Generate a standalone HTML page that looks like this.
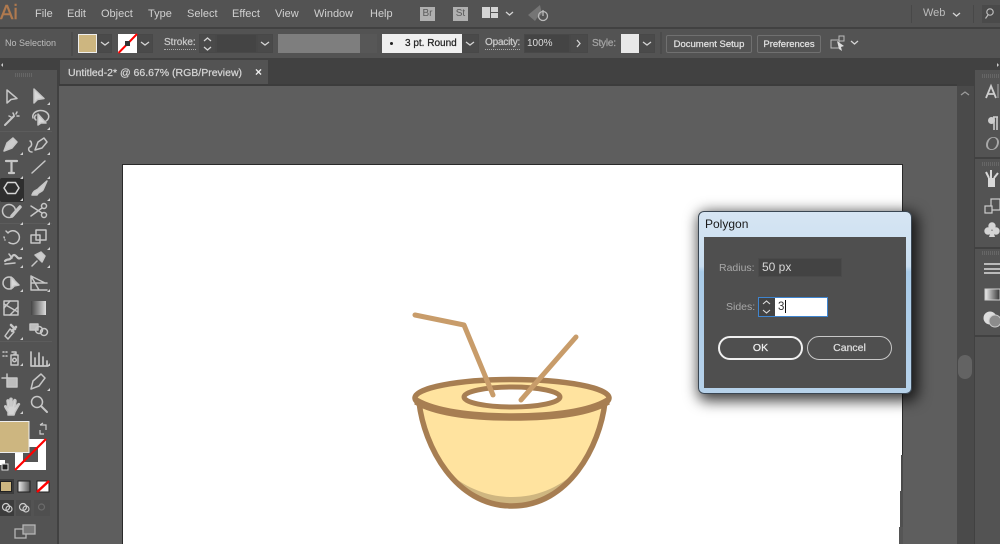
<!DOCTYPE html>
<html><head><meta charset="utf-8">
<style>
html,body{margin:0;padding:0;width:1000px;height:544px;overflow:hidden;background:#535353}
*{box-sizing:border-box}
body{font-family:"Liberation Sans",sans-serif;position:relative}
#w{position:absolute;left:0;top:0;width:1000px;height:544px;overflow:hidden;filter:blur(.3px)}
.a{position:absolute}
.t{position:absolute;white-space:nowrap;color:#d0d0d0;font-size:11px;line-height:14px}
.c{font-size:10px;-webkit-text-stroke:.25px currentColor}
.box{position:absolute;background:#4a4a4a;border:1px solid #484848}
svg{position:absolute;left:0;top:0;overflow:visible}
</style></head><body><div id="w">
<!-- menu bar -->
<div class="a" style="left:0;top:27px;width:1000px;height:2px;background:#414141"></div>
<div class="t" style="left:0;top:2px;font-size:20px;line-height:23px;color:#b07a4f;-webkit-text-stroke:.4px #b07a4f">Ai</div>
<div class="t" style="left:35px;top:7px">File</div>
<div class="t" style="left:67px;top:7px">Edit</div>
<div class="t" style="left:101px;top:7px">Object</div>
<div class="t" style="left:148px;top:7px">Type</div>
<div class="t" style="left:187px;top:7px">Select</div>
<div class="t" style="left:232px;top:7px">Effect</div>
<div class="t" style="left:275px;top:7px">View</div>
<div class="t" style="left:314px;top:7px">Window</div>
<div class="t" style="left:370px;top:7px">Help</div>
<div class="a" style="left:420px;top:7px;width:15px;height:14px;background:#b0b0b0;color:#5a5a5a;font-size:10px;line-height:14px;text-align:center">Br</div>
<div class="a" style="left:453px;top:7px;width:15px;height:14px;background:#b0b0b0;color:#5a5a5a;font-size:10px;line-height:14px;text-align:center">St</div>
<div class="a" style="left:482px;top:7px;width:8px;height:11px;background:#d4d4d4"></div>
<div class="a" style="left:491px;top:7px;width:7px;height:5px;background:#d4d4d4"></div>
<div class="a" style="left:491px;top:13px;width:7px;height:5px;background:#d4d4d4"></div>
<div class="t" style="left:923px;top:6px;color:#bcbcbc">Web</div>
<div class="a" style="left:911px;top:5px;width:1px;height:18px;background:#484848"></div>
<div class="a" style="left:973px;top:5px;width:1px;height:18px;background:#484848"></div>
<div class="a" style="left:982px;top:5px;width:18px;height:18px;background:#4a4a4a"></div>

<!-- control bar -->
<div class="t" style="left:5px;top:36px;font-size:9px;color:#bdbdbd">No Selection</div>
<div class="a" style="left:71px;top:32px;width:2px;height:24px;background:#4b4b4b"></div>
<div class="a" style="left:78px;top:34px;width:19px;height:19px;background:#cdb680;border:1px solid #eee"></div>
<div class="box" style="left:97px;top:34px;width:15px;height:19px"></div>
<div class="a" style="left:118px;top:34px;width:19px;height:19px;background:#fff"></div>
<div class="box" style="left:137px;top:34px;width:16px;height:19px"></div>
<div class="t c" style="left:164px;top:36px;color:#c8c8c8;border-bottom:1px dotted #aaa;line-height:13px">Stroke:</div>
<div class="box" style="left:199px;top:34px;width:17px;height:19px"></div>
<div class="box" style="left:216px;top:34px;width:41px;height:19px;background:#444"></div>
<div class="box" style="left:257px;top:34px;width:16px;height:19px"></div>
<div class="a" style="left:278px;top:34px;width:82px;height:19px;background:#7e7e7e"></div>
<div class="a" style="left:360px;top:34px;width:17px;height:19px;background:#575757"></div>
<div class="a" style="left:382px;top:34px;width:80px;height:19px;background:#f0f0f0"></div>
<div class="t c" style="left:405px;top:37px;color:#222">3 pt. Round</div>
<div class="a" style="left:390px;top:42px;width:3px;height:3px;border-radius:2px;background:#222"></div>
<div class="box" style="left:462px;top:34px;width:17px;height:19px"></div>
<div class="t c" style="left:485px;top:36px;color:#c8c8c8;border-bottom:1px dotted #aaa;line-height:13px;letter-spacing:-.2px">Opacity:</div>
<div class="box" style="left:524px;top:34px;width:46px;height:19px;background:#444"></div>
<div class="t" style="left:527px;top:37px;font-size:10px;color:#ddd">100%</div>
<div class="box" style="left:570px;top:34px;width:18px;height:19px"></div>
<div class="t c" style="left:592px;top:37px;color:#a4a4a4;letter-spacing:-.2px">Style:</div>
<div class="a" style="left:621px;top:34px;width:18px;height:19px;background:#e8e8e8"></div>
<div class="box" style="left:639px;top:34px;width:16px;height:19px"></div>
<div class="a" style="left:660px;top:32px;width:2px;height:22px;background:#4b4b4b"></div>
<div class="a c" style="left:666px;top:35px;width:86px;height:18px;border:1px solid #707070;border-radius:2px;color:#e0e0e0;font-size:9.500px;line-height:17px;text-align:center">Document Setup</div>
<div class="a c" style="left:757px;top:35px;width:64px;height:18px;border:1px solid #707070;border-radius:2px;color:#e0e0e0;font-size:9.500px;line-height:17px;text-align:center">Preferences</div>

<!-- tab bar / pasteboard -->
<div class="a" style="left:0;top:58px;width:1000px;height:28px;background:#414141"></div>
<div class="a" style="left:60px;top:60px;width:208px;height:26px;background:#535353"></div>
<div class="t c" style="left:68px;top:66px;font-size:10.500px;color:#d4d4d4">Untitled-2* @ 66.67% (RGB/Preview)</div>
<div class="t" style="left:255px;top:65px;font-size:12px;font-weight:bold;color:#eee">×</div>
<div class="a" style="left:58px;top:86px;width:899px;height:458px;background:#5e5e5e"></div>
<div class="a" style="left:58px;top:84px;width:899px;height:2px;background:#3c3c3c"></div>
<!-- scrollbar -->
<div class="a" style="left:957px;top:86px;width:17px;height:458px;background:#4a4a4a"></div>
<div class="a" style="left:958px;top:355px;width:14px;height:24px;border-radius:7px;background:#636363"></div>
<!-- artboard -->
<div class="a" style="left:122px;top:164px;width:781px;height:380px;background:#fff;border:1px solid #2a2a2a;border-width:1px 1px 0 1px"></div>
<div class="a" style="left:901px;top:455px;width:2px;height:36px;background:#4a4a4a"></div>
<div class="a" style="left:900px;top:491px;width:3px;height:36px;background:#4f4f4f"></div>
<div class="a" style="left:899px;top:527px;width:4px;height:17px;background:#555"></div>

<!-- left toolbar -->
<div class="a" style="left:0;top:58px;width:59px;height:486px;background:#414141"></div>
<div class="a" style="left:0;top:70px;width:57px;height:474px;background:#535353"></div>
<div class="a" style="left:0;top:178px;width:24px;height:24px;background:#2e2e2e;border-radius:2px"></div>
<div class="a" style="left:0;top:131px;width:52px;height:1px;background:#5c5c5c"></div>
<div class="a" style="left:0;top:223px;width:52px;height:1px;background:#5c5c5c"></div>
<div class="a" style="left:0;top:341px;width:52px;height:1px;background:#5c5c5c"></div>
<div class="a" style="left:0;top:479px;width:14px;height:15px;background:#3c3c3c"></div>
<!-- right panel -->
<div class="a" style="left:974px;top:58px;width:26px;height:486px;background:#414141"></div>
<div class="a" style="left:975px;top:70px;width:25px;height:474px;background:#535353"></div>
<div class="a" style="left:975px;top:157px;width:25px;height:2px;background:#414141"></div>
<div class="a" style="left:975px;top:247px;width:25px;height:2px;background:#414141"></div>
<div class="a" style="left:975px;top:335px;width:25px;height:2px;background:#414141"></div>

<svg width="1000" height="544" viewBox="0 0 1000 544" fill="none">
 <g stroke="#d4d4d4" stroke-width="1.300">
  <path d="M101 42l4 3 4-3M141 42l4 3 4-3M261 42l4 3 4-3M466 42l4 3 4-3M643 42l4 3 4-3M577 40l3 3.500-3 3.500M506 12l3.500 3 3.500-3M953 13l3.500 3 3.500-3M851 41l3.500 3 3.500-3M204 41l3.500-3 3.500 3M204 47l3.500 3 3.500-3"/>
 </g>
 <circle cx="990" cy="12" r="3.200" stroke="#bdbdbd" stroke-width="1.200"/><path d="M988 15l-2.500 3.500" stroke="#bdbdbd" stroke-width="1.200"/>
 <path d="M118.500 53L137 34" stroke="#f00" stroke-width="2"/>
 <rect x="125" y="41" width="5" height="5" fill="#333"/>
 <path d="M528 15l12-10 2 9-5 4-2 3z" fill="#757575"/>
 <circle cx="543" cy="16" r="4.500" stroke="#bbb" stroke-width="1.300"/><path d="M543 10v6" stroke="#bbb" stroke-width="1.300"/>
 <path d="M831 40h8v8h-8z" stroke="#bbb"/><path d="M839 36h5v5h-5z" stroke="#bbb"/><path d="M837 41l7 5-3 1 1 4-3-2z" fill="#ddd"/>

 <!-- toolbar icons -->
 <g stroke="#c6c6c6" stroke-width="1.500" stroke-linejoin="round" stroke-linecap="round">
  <path d="M7 90v13l4-3.500 6-1z"/>
  <path d="M34 89v14l3.500-3.500 6.500-1z" fill="#d8d8d8"/>
  <path d="M5 125l9-9" stroke-width="2"/><path d="M13 113l1 2M17 116l2 0M11 117l-2-1M17 112l-1 2" />
  <path d="M33 118a8 6 0 1 1 13 3M36 120a3 3 0 0 1 0-5"/>
  <path d="M38 114l0 11 3-2 5 0z" fill="#d8d8d8"/>
  <path d="M4 151l3-8 6-5 4 4-5 6z" fill="#cdcdcd"/>
  <path d="M32 152c-4 0-4-4-2-5 3-2 1-6 0-6M35 150l3-8 6-4 3 4-5 6z" fill="none"/>
  <path d="M6 161h11M11.500 161v12M9 173h5" stroke-width="2.200"/>
  <path d="M32 173l13-12"/>
  <path d="M4 188l3.500-5.500h8l3.500 5.500-3.500 5.500h-8z" stroke="#d6d6d6"/>
  <path d="M32 195c2-6 5-4 7-7l8-7-4 9c-2 3-4 1-6 5z" fill="#cdcdcd"/>
  <circle cx="9" cy="211" r="6.500"/><path d="M12 216l8-9" stroke-width="3.500"/>
  <path d="M31 206l11 7M31 216l11-8"/><circle cx="44" cy="206" r="2.500"/><circle cx="44" cy="215" r="2.500"/>
  <path d="M6 231l2 2a6.500 6.500 0 1 1 1 9.500" /><path d="M4 237l1 3" stroke-dasharray="1 2"/>
  <rect x="31" y="235" width="9" height="8"/><rect x="36" y="230" width="10" height="10"/>
  <path d="M5 261c3-3 4 0 6-3s3-4 5-2 2 3 5 2" stroke-width="2.200"/><path d="M9 254l3 4M5 264l10-1"/>
  <path d="M32 266l5-5M35 255l7 7 3-6-4-4z" fill="#cdcdcd"/>
  <circle cx="9" cy="283" r="6"/><path d="M11 277l0 12 3-3 5-1z" fill="#d8d8d8"/>
  <path d="M31 276v14h16M31 276l14 7M31 276l8 14M31 283h16"/>
  <rect x="4" y="301" width="14" height="14"/><path d="M4 308l6-7M10 315l8-8M4 304l14 8"/>
 </g>
 <defs>
  <linearGradient id="gr" x1="0" x2="1" y1="0" y2="0"><stop offset="0" stop-color="#444"/><stop offset="1" stop-color="#ddd"/></linearGradient>
  <linearGradient id="gr2" x1="0" x2="1" y1="0" y2="0"><stop offset="0" stop-color="#eee"/><stop offset="1" stop-color="#333"/></linearGradient>
  <linearGradient id="gr3" x1="0" x2="1" y1="0" y2="0"><stop offset="0" stop-color="#eee"/><stop offset="1" stop-color="#555"/></linearGradient>
 </defs>
 <rect x="31" y="301" width="15" height="14" fill="url(#gr)"/>
 <g stroke="#c6c6c6" stroke-width="1.500" stroke-linejoin="round" stroke-linecap="round">
  <path d="M5 336l5-7 4 3-6 7z"/><path d="M11 325l4 4M12 331l4-4" stroke-width="2.600"/>
  <rect x="30" y="324" width="8" height="6" fill="#bdbdbd"/><circle cx="39" cy="330" r="3.500"/><circle cx="44" cy="332" r="3.500"/>
  <path d="M12 352h4v2h-2M11 355h7v10h-7z"/><circle cx="14.500" cy="360" r="1.800"/><path d="M3 352h1M6 352h1M3 356h1M6 356h1" />
  <path d="M31 352v14h17M35 365v-7M39 365v-12M43 365v-8M47 365v-4" stroke-width="1.700"/>
  <path d="M2 378h6M7 374v4"/><rect x="7" y="378" width="10" height="9" fill="#bdbdbd"/>
  <path d="M31 389l2-8 8-7 4 4-6 8z"/>
  <path d="M8 412c-2-3-4-6-3-6 1-1 3 2 3 2l-1-7c0-2 2-1 2 0l1 5 0-7c0-1 2-1 2 0l0 7 2-6c1-1 2 0 2 1l-1 6 3-3c1-1 2 0 1 1l-4 7-1 3h-6z" fill="#d4d4d4"/>
  <circle cx="37" cy="402" r="5.500"/><path d="M41 406l6 6" stroke-width="2"/>
 </g>
 <g fill="#cfcfcf">
  <path d="M50 105h-3l3-3zM50 130h-3l3-3zM23 155h-3l3-3zM50 155h-3l3-3zM23 179h-3l3-3zM50 179h-3l3-3zM23 201h-3l3-3zM50 201h-3l3-3zM23 225h-3l3-3zM50 225h-3l3-3zM23 250h-3l3-3zM50 250h-3l3-3zM23 268h-3l3-3zM50 268h-3l3-3zM23 292h-3l3-3zM50 292h-3l3-3zM23 340h-3l3-3zM23 366h-3l3-3zM50 366h-3l3-3zM50 391h-3l3-3zM23 414h-3l3-3z"/>
 </g>
 <rect x="15" y="439" width="31" height="31" fill="#fff"/>
 <rect x="23" y="447" width="15" height="15" fill="#555"/>
 <path d="M15 470L46 439" stroke="#f00" stroke-width="2.200"/>
 <rect x="-1" y="421.500" width="30" height="31" fill="#cdb680" stroke="#eee"/>
 <path d="M40 425h6v5M40 425l3-2M44 434h-4v-4" stroke="#ccc" stroke-width="1.200"/>
 <rect x="0" y="460" width="5" height="5" fill="#fff"/><rect x="2" y="464" width="6" height="6" fill="#222" stroke="#ddd"/>
 <rect x="0.500" y="481.500" width="11" height="10" fill="#cdb680" stroke="#222"/>
 <rect x="18" y="481" width="12" height="11" fill="url(#gr3)" stroke="#222"/>
 <rect x="37" y="481" width="12" height="11" fill="#fff" stroke="#222"/>
 <path d="M37 492L49 481" stroke="#f00" stroke-width="2.500"/>
 <rect x="0" y="500" width="14" height="16" fill="#3c3c3c"/>
 <rect x="16" y="500" width="15" height="16" fill="#4c4c4c"/>
 <rect x="34" y="500" width="16" height="16" fill="#4f4f4f"/>
 <g stroke="#ccc" stroke-width="1.200">
  <circle cx="6" cy="507" r="3.500"/><circle cx="9" cy="509" r="3"/>
  <circle cx="23" cy="507" r="3.500"/><circle cx="26" cy="509" r="3"/>
  <circle cx="41.500" cy="507" r="3" stroke="#6b6b6b"/>
 </g>
 <rect x="15" y="529" width="11" height="9" stroke="#b5b5b5" stroke-width="1.300"/>
 <rect x="23" y="525" width="12" height="9" fill="#7a7a7a" stroke="#b5b5b5" stroke-width="1.300"/>
 <path d="M1 65l2-2v4z" fill="#ccc"/><path d="M999 65l-2-2v4z" fill="#ccc"/>
 <path d="M15 74h18M15 76h18" stroke="#787878" stroke-dasharray="1 1"/>
 <path d="M982 75h18M982 77h18M982 163h18M982 165h18M982 252h18M982 254h18" stroke="#787878" stroke-dasharray="1 1"/>
 <path d="M961 95l4-3 4 3" stroke="#9b9b9b" stroke-width="1.300"/>
 <!-- right icons -->
 <path d="M986 98l5-12 5 12M988 94h6" stroke="#cdcdcd" stroke-width="1.800"/>
 <path d="M998 84v14" stroke="#aaa"/>
 <path d="M993 117h5M994 117v13M997 117v13" stroke="#ccc" stroke-width="1.600"/><circle cx="991.500" cy="120.500" r="3.500" fill="#ccc"/>
 <text x="985" y="150" font-family="Liberation Serif, serif" font-style="italic" font-size="20" fill="#a8a8a8">O</text>
 <path d="M988 178h7v9h-7z" fill="#d8d8d8"/><path d="M989 178l-3-6M991 178v-8M994 178l4-5" stroke="#d8d8d8" stroke-width="2"/>
 <rect x="991" y="199" width="9" height="11" stroke="#ccc" stroke-width="1.200"/><rect x="985" y="206" width="7" height="7" fill="#535353" stroke="#ccc" stroke-width="1.200"/>
 <g fill="#d4d4d4"><circle cx="992" cy="226" r="3.700"/><circle cx="988" cy="231" r="3.700"/><circle cx="996" cy="231" r="3.700"/><path d="M991 231h2l2 6h-6z"/></g>
 <path d="M984 264h16M984 269h16M984 273h16" stroke="#dcdcdc" stroke-width="1.600"/>
 <rect x="985" y="289" width="15" height="11" fill="url(#gr2)" stroke="#ccc"/>
 <circle cx="990" cy="318" r="6.500" fill="#dcdcdc"/><circle cx="995" cy="321" r="6" fill="#8c8c8c" stroke="#ccc"/>

 <!-- coconut -->
 <path d="M419 402C424 446 455 506 512 506 569 506 600 446 605 402Z" fill="#ffe39f"/>
 <path d="M452 476C472 491 492 497 512 497 535 497 558 489 578 470 560 497 536 506 512 506 488 506 468 495 452 476Z" fill="#cfb680"/>
 <path d="M419 402C424 446 455 506 512 506 569 506 600 446 605 402" stroke="#a77e52" stroke-width="5.500"/>
 <ellipse cx="512" cy="398" rx="97" ry="18.500" fill="#ffe39f" stroke="#a77e52" stroke-width="5.500"/>
 <path d="M416 401C435 412 470 417 512 417 555 417 590 412 608 401" stroke="#a77e52" stroke-width="7.500"/>
 <ellipse cx="512" cy="397" rx="48" ry="10" fill="#fff" stroke="#a77e52" stroke-width="5"/>
 <path d="M415 315L464 325 493 395M576 337L521 400" stroke="#c89c6a" stroke-width="5" stroke-linecap="round" stroke-linejoin="round"/>
</svg>

<!-- dialog -->
<div class="a" style="left:698px;top:211px;width:214px;height:183px;border-radius:6px;border:1px solid #3a4652;background:linear-gradient(180deg,#d6e5f3 0%,#c9def0 30%,#a9cbe8 33%,#b7d2ea 100%);box-shadow:3px 4px 14px 3px rgba(0,0,0,.75)"></div>
<div class="t" style="left:705px;top:217px;font-size:12px;color:#1a1a1a">Polygon</div>
<div class="a" style="left:704px;top:237px;width:202px;height:151px;background:#4f4f4f"></div>
<div class="t" style="left:719px;top:261px;color:#a8a8a8;font-size:10.500px">Radius:</div>
<div class="a" style="left:758px;top:258px;width:84px;height:19px;background:#434343;border:1px solid #4a4a4a"></div>
<div class="t" style="left:762px;top:260px;color:#d8d8d8;font-size:12px">50 px</div>
<div class="t" style="left:726px;top:300px;color:#a8a8a8;font-size:10.500px">Sides:</div>
<div class="a" style="left:758px;top:297px;width:70px;height:20px;background:#fff;border:1px solid #3f85d0"></div>
<div class="a" style="left:759px;top:298px;width:16px;height:18px;background:#434343"></div>
<div class="t" style="left:778px;top:300px;color:#333;font-size:11.500px">3</div>
<div class="a" style="left:785px;top:300px;width:1px;height:13px;background:#111"></div>
<div class="a c" style="left:718px;top:336px;width:85px;height:24px;border:2px solid #f0f0f0;border-radius:12px;color:#eee;font-size:10.500px;line-height:20px;text-align:center">OK</div>
<div class="a c" style="left:807px;top:336px;width:85px;height:24px;border:1px solid #c8c8c8;border-radius:12px;color:#ddd;font-size:10.500px;line-height:22px;text-align:center">Cancel</div>
<svg width="1000" height="544" viewBox="0 0 1000 544" fill="none">
 <path d="M763 304l3.500-3 3.500 3M763 310l3.500 3 3.500-3" stroke="#ddd" stroke-width="1.100"/>
</svg>
</div></body></html>
